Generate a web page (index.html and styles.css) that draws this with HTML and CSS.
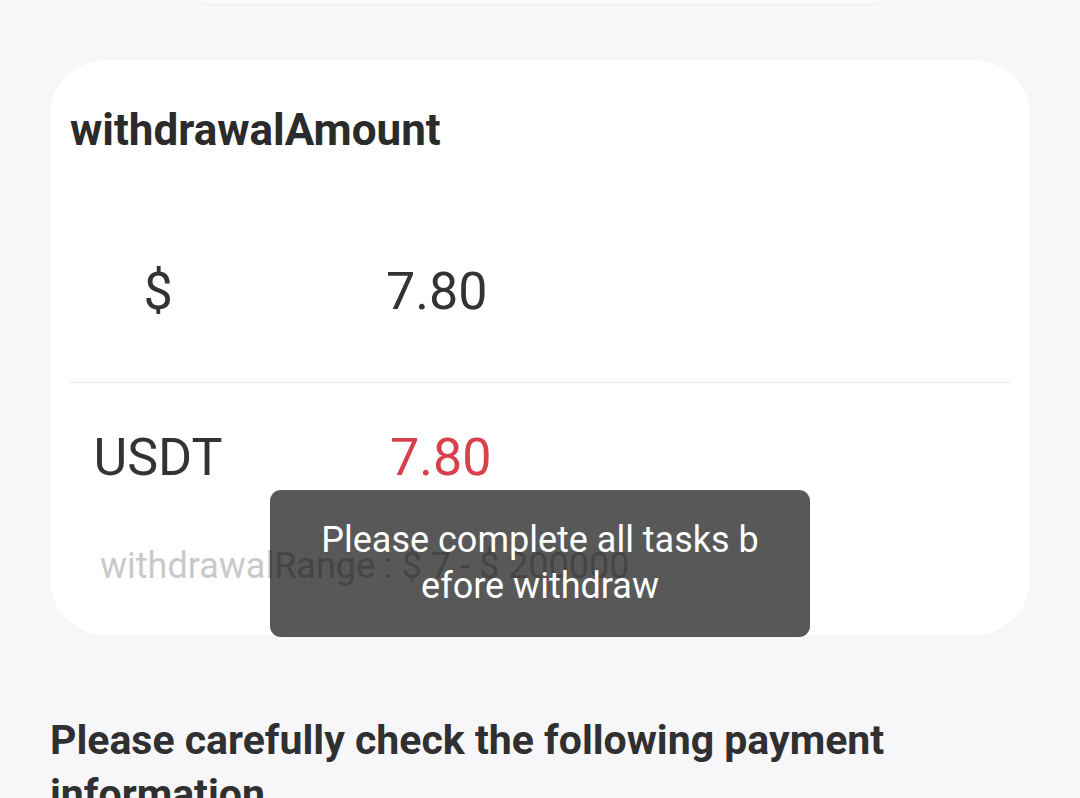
FILE: index.html
```html
<!DOCTYPE html>
<html lang="en">
  <head>
    <meta charset="UTF-8" />
    <meta name="viewport" content="width=device-width, initial-scale=1.0" />
    <title>Withdraw</title>
    <link rel="stylesheet" href="styles.css">
  </head>
  <body>
    <div class="page">
      <div class="top-card"></div>

      <div class="card">
        <h2 class="card-title">withdrawalAmount</h2>
        <div class="amount-row line">
          <span class="amount-label">$</span>
          <span class="amount-value">7.80</span>
        </div>
        <div class="amount-row second">
          <span class="amount-label">USDT</span>
          <span class="amount-value red">7.80</span>
        </div>
        <div class="range">withdrawalRange : $ 7 - $ 200000</div>
      </div>

      <h3 class="notice">Please carefully check the following payment information</h3>
    </div>

    <div class="toast">Please complete all tasks before withdraw</div>
  </body>
</html>
```

FILE: styles.css
```css
body {
  margin: 0;
  padding: 0;
  background-color: #f7f7fa;
  font-family: Roboto, "Liberation Sans", sans-serif;
  color: #333333;
  height: 798px;
  overflow: hidden;
}
.page {
  padding: 0 50px;
}
.top-card {
  width: 712px;
  height: 44px;
  margin: -40px auto 0;
  background: #fbfbfd;
  border-radius: 0 0 30px 30px;
  box-shadow: 0 1px 1px rgba(0, 0, 0, 0.04);
}
.card {
  margin-top: 56px;
  background: #ffffff;
  border-radius: 56px;
  padding: 44px 20px 47px;
}
.card-title {
  margin: 0;
  font-size: 44px;
  line-height: 52px;
  font-weight: bold;
  color: #2b2b2b;
}
.amount-row {
  display: flex;
  align-items: center;
  height: 60px;
}
.amount-row.line {
  padding: 105px 0 61px;
  border-bottom: 1px solid #ebebeb;
}
.amount-row.second {
  padding-top: 44px;
}
.amount-label {
  width: 176px;
  text-align: center;
  font-size: 52px;
  color: #333333;
}
.amount-value {
  margin-left: 140px;
  font-size: 52px;
  color: #333333;
}
.amount-value.red {
  margin-left: 144px;
  color: #d8414b;
}
.range {
  margin-top: 57px;
  padding-left: 30px;
  font-size: 36px;
  line-height: 44px;
  color: #c9c9c9;
}
.notice {
  margin: 78px 0 0;
  font-size: 41px;
  line-height: 54px;
  font-weight: bold;
  color: #303030;
}
.toast {
  position: absolute;
  top: 490px;
  left: 270px;
  width: 440px;
  padding: 27px 50px 28px;
  background: rgba(0, 0, 0, 0.655);
  border-radius: 11px;
  color: #ffffff;
  font-size: 36px;
  line-height: 46px;
  text-align: center;
  word-break: break-all;
}
```
